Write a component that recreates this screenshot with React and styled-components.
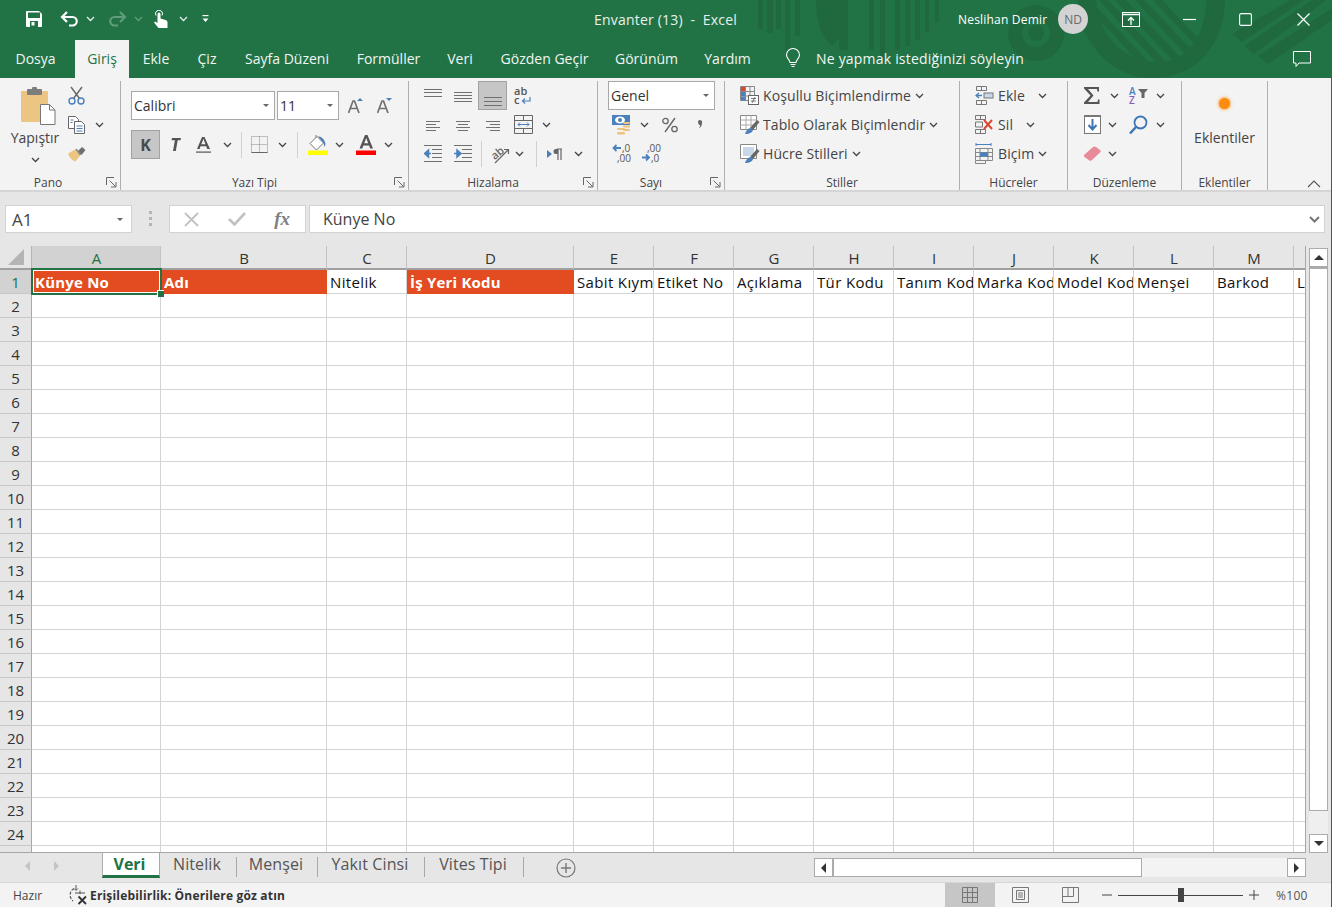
import styled, { createGlobalStyle } from 'styled-components';

const GlobalStyle = createGlobalStyle`
  html, body {
    margin: 0;
    padding: 0;
    height: 100%;
    overflow: hidden;
  }
  body {
    font-family: 'Open Sans', 'Noto Sans', sans-serif;
    color: #444;
  }
  * {
    box-sizing: border-box;
  }
  svg {
    display: block;
    flex-shrink: 0;
  }
`;

const Window = styled.div`
  position: relative;
  width: 1332px;
  height: 907px;
  display: flex;
  flex-direction: column;
  background-color: #e6e6e6;
  overflow: hidden;
`;
const EdgeLine = styled.div`
  position: absolute;
  right: 0;
  top: 78px;
  bottom: 0;
  width: 1px;
  background-color: #217346;
`;

/* green header */
const Header = styled.div`
  position: relative;
  height: 78px;
  background-color: #217346;
  color: #fff;
  flex-shrink: 0;
`;
const Decor = styled.svg`
  position: absolute;
  left: 0;
  top: 0;
`;
const TitleBar = styled.div`
  position: relative;
  height: 40px;
  padding-bottom: 2px;
  display: flex;
  align-items: center;
`;
const Qat = styled.div`
  width: 520px;
  padding-left: 26px;
  display: flex;
  align-items: center;
`;
const QatBtn = styled.div`
  width: ${(p) => p.$w}px;
  display: flex;
`;
const DocTitle = styled.div`
  width: 291px;
  text-align: center;
  font-size: 14px;
  letter-spacing: 0.2px;
  color: #e9f1ec;
  white-space: pre;
`;
const UserBlock = styled.div`
  margin-left: 147px;
  display: flex;
  align-items: center;
  font-size: 12px;
  letter-spacing: 0.2px;
  width: 130px;
  gap: 11px;
  white-space: nowrap;
`;
const Avatar = styled.div`
  width: 30px;
  height: 30px;
  border-radius: 50%;
  background-color: #d3d3d3;
  color: #6a6a6a;
  font-size: 12px;
  letter-spacing: 0;
  display: flex;
  align-items: center;
  justify-content: center;
`;
const WinButtons = styled.div`
  margin-left: 34px;
  display: flex;
  align-items: center;
  gap: 43px;
`;
const CloseSlot = styled.div`
  margin-left: 2px;
`;
const TabBar = styled.div`
  position: relative;
  height: 38px;
  display: flex;
  align-items: stretch;
`;
const RibbonTab = styled.div`
  width: ${(p) => p.$w}px;
  margin-left: ${(p) => p.$ml || 0}px;
  padding-bottom: 2px;
  display: flex;
  align-items: center;
  justify-content: center;
  font-size: 14px;
  white-space: nowrap;
  color: ${(p) => (p.$active ? '#217346' : '#f1f6f3')};
  background-color: ${(p) => (p.$active ? '#f3f3f3' : 'transparent')};
`;
const TellMe = styled.div`
  margin-left: 20px;
  padding-bottom: 2px;
  display: flex;
  align-items: center;
  gap: 15px;
  font-size: 14px;
  letter-spacing: 0.2px;
  color: #f1f6f3;
  width: 508px;
`;
const CommentSlot = styled.div`
  display: flex;
  align-items: center;
`;

/* ribbon */
const Ribbon = styled.div`
  height: 114px;
  flex-shrink: 0;
  display: flex;
  background-color: #f3f3f3;
  border-bottom: 2px solid #d5d5d5;
  position: relative;
`;
const Group = styled.div`
  position: relative;
  width: ${(p) => p.$w}px;
  height: 109px;
  margin-top: 3px;
  padding-left: ${(p) => p.$pl || 0}px;
  display: flex;
  flex-direction: column;
  border-right: 1px solid #b0b0b0;
`;
const GroupBody = styled.div`
  height: 90px;
  display: flex;
  flex-direction: column;
`;
const GroupLabel = styled.div`
  position: absolute;
  left: 0;
  right: ${(p) => p.$r || 0}px;
  bottom: -1px;
  text-align: center;
  font-size: 12px;
  color: #444;
`;
const Launcher = styled.div`
  position: absolute;
  right: 3px;
  bottom: 2px;
`;
const ToolRow = styled.div`
  height: 29px;
  margin-top: ${(p) => p.$mt || 0}px;
  display: flex;
  align-items: center;
`;
const Tool = styled.div`
  width: ${(p) => (p.$w === undefined ? 29 : p.$w)}px;
  height: ${(p) => (p.$on ? 29 : 24)}px;
  margin-left: ${(p) => p.$ml || 0}px;
  display: flex;
  align-items: center;
  justify-content: center;
  background-color: ${(p) => (p.$on ? '#c6c6c6' : 'transparent')};
  border: ${(p) => (p.$on ? '1px solid #a2a2a2' : 'none')};
  font-size: 14px;
  color: #555;
`;
const ToolSep = styled.div`
  width: 1px;
  height: 26px;
  background-color: #d0d0d0;
  margin-left: ${(p) => p.$m || 4}px;
  margin-right: ${(p) => p.$mr || p.$m || 4}px;
`;
const Combo = styled.div`
  width: ${(p) => p.$w}px;
  height: 29px;
  margin-right: 2px;
  background-color: #fff;
  border: 1px solid #a8a8a8;
  display: flex;
  align-items: center;
  justify-content: space-between;
  padding: 0 5px 0 2px;
  font-size: 14px;
  color: #333;
`;
const CaretDown = styled.span`
  width: 0;
  height: 0;
  border-left: 3px solid transparent;
  border-right: 3px solid transparent;
  border-top: 3px solid #666;
`;
const PanoBody = styled.div`
  display: flex;
`;
const PasteBtn = styled.div`
  width: 68px;
  flex-shrink: 0;
  padding: 6px 0 0 2px;
  display: flex;
  flex-direction: column;
  align-items: center;
  font-size: 14px;
  color: #444;
`;
const PasteArt = styled.div`
  margin-left: 7px;
`;
const PasteLabel = styled.div`
  margin: 2px 0 9px;
  line-height: 20px;
`;
const SmallTool = styled.div`
  height: 29px;
  display: flex;
  align-items: center;
  gap: 10px;
`;
const StyleRow = styled.div`
  height: 29px;
  display: flex;
  align-items: center;
  font-size: 14px;
  letter-spacing: 0.1px;
  color: #444;
  white-space: nowrap;
`;
const StyleIcon = styled.div`
  width: 23px;
  display: flex;
`;
const StyleChev = styled.div`
  margin-left: ${(p) => p.$ml || 4}px;
`;
const AddinBody = styled.div`
  display: flex;
  flex-direction: column;
  align-items: center;
  padding-top: 17px;
  font-size: 14px;
  color: #444;
`;
const AddinDot = styled.div`
  width: 11px;
  height: 11px;
  border-radius: 50%;
  background-color: #fb8c10;
  box-shadow: 0 0 3px 1px #fbb060;
`;
const AddinName = styled.div`
  margin-top: 19px;
`;
const Collapse = styled.div`
  position: absolute;
  right: 11px;
  bottom: 2px;
`;
const BoldLetterK = styled.span`
  font-weight: 700;
  font-size: 16px;
  color: #4a4a4a;
`;

/* formula bar */
const FormulaBar = styled.div`
  height: 54px;
  flex-shrink: 0;
  padding: 13px 7px 0 5px;
  display: flex;
  align-items: flex-start;
`;
const NameBox = styled.div`
  width: 127px;
  height: 28px;
  background-color: #fff;
  border: 1px solid #d2d2d2;
  display: flex;
  align-items: center;
  justify-content: space-between;
  padding: 0 8px 0 6px;
  font-size: 17px;
  color: #444;
`;
const Grip = styled.div`
  width: 37px;
  height: 28px;
  display: flex;
  align-items: center;
  justify-content: center;
`;
const FxBox = styled.div`
  width: 137px;
  height: 28px;
  margin-right: 3px;
  background-color: #fff;
  border: 1px solid #d2d2d2;
  display: flex;
  align-items: center;
  justify-content: space-between;
  padding: 0 15px 0 14px;
`;
const FxLabel = styled.span`
  font-family: 'Liberation Serif', serif;
  font-style: italic;
  font-weight: 700;
  font-size: 19px;
  color: #808080;
`;
const FormulaInput = styled.div`
  flex: 1;
  height: 28px;
  background-color: #fff;
  border: 1px solid #d2d2d2;
  display: flex;
  align-items: center;
  justify-content: space-between;
  padding: 0 4px 0 13px;
  font-size: 16px;
  color: #444;
`;

/* sheet */
const SheetArea = styled.div`
  flex: 1;
  min-height: 0;
  display: flex;
`;
const Sheet = styled.div`
  width: 1306px;
  overflow: hidden;
  border-bottom: 1px solid #a8a8a8;
  border-right: 1px solid #a8a8a8;
`;
const HeadRow = styled.div`
  height: 24px;
  display: flex;
`;
const Corner = styled.div`
  width: 32px;
  flex-shrink: 0;
  border-bottom: 2px solid #a0a0a0;
  border-right: 1px solid #b4b4b4;
  display: flex;
  align-items: center;
  justify-content: center;
`;
const ColHead = styled.div`
  width: ${(p) => p.$w}px;
  flex-shrink: 0;
  display: flex;
  align-items: center;
  justify-content: center;
  font-size: 15px;
  padding: 1px 0 0 1px;
  border-right: 1px solid #c2c2c2;
  border-bottom: 2px solid #a0a0a0;
  color: ${(p) => (p.$active ? '#217346' : '#333')};
  background-color: ${(p) => (p.$active ? '#d2d2d2' : 'transparent')};
  overflow: hidden;
`;
const Row = styled.div`
  height: 24px;
  display: flex;
`;
const RowHead = styled.div`
  width: 32px;
  flex-shrink: 0;
  display: flex;
  align-items: center;
  justify-content: center;
  font-size: 15px;
  border-right: 1px solid #a8a8a8;
  border-bottom: 1px solid #c8c8c8;
  color: ${(p) => (p.$active ? '#217346' : '#333')};
  background-color: ${(p) => (p.$active ? '#d2d2d2' : '#e6e6e6')};
`;
const Cell = styled.div`
  position: relative;
  width: ${(p) => p.$w}px;
  flex-shrink: 0;
  display: flex;
  align-items: center;
  padding-left: 3px;
  font-size: 15px;
  letter-spacing: ${(p) => (p.$head ? 0.2 : 0.35)}px;
  white-space: nowrap;
  overflow: ${(p) => (p.$sel ? 'visible' : 'hidden')};
  font-weight: ${(p) => (p.$head ? 700 : 400)};
  color: ${(p) => (p.$head ? '#fff' : '#111')};
  background-color: ${(p) => (p.$head ? '#e34c20' : '#fff')};
  border-right: 1px solid ${(p) => (p.$head ? '#e34c20' : '#d4d4d4')};
  border-bottom: 1px solid ${(p) => (p.$head ? '#e34c20' : '#d4d4d4')};
`;
const CellClip = styled.span`
  display: block;
  width: 100%;
  overflow: hidden;
`;
const Selection = styled.div`
  position: absolute;
  z-index: 2;
  left: -1px;
  top: -2px;
  right: -2px;
  bottom: -2px;
  border: 2px solid #217346;
  outline: 1px solid #fff;
  outline-offset: -3px;
`;
const Handle = styled.div`
  position: absolute;
  right: -4px;
  bottom: -4px;
  width: 7px;
  height: 7px;
  background-color: #217346;
  border-left: 1px solid #fff;
  border-top: 1px solid #fff;
`;

/* scrollbars */
const VScroll = styled.div`
  width: 26px;
  padding: 2px 0 0 3px;
  display: flex;
  flex-direction: column;
`;
const ScrollBtn = styled.div`
  width: 19px;
  height: 19px;
  background-color: #fff;
  border: 1px solid #ababab;
  display: flex;
  align-items: center;
  justify-content: center;
  flex-shrink: 0;
`;
const VThumb = styled.div`
  width: 19px;
  height: 544px;
  background-color: #fff;
  border: 1px solid #ababab;
  border-top-width: 2px;
`;
const VTrack = styled.div`
  flex: 1;
  width: 19px;
  background-color: #efefef;
`;
const Tri = styled.span`
  width: 0;
  height: 0;
  ${(p) => p.$dir === 'up' && `border-left: 5px solid transparent; border-right: 5px solid transparent; border-bottom: 5px solid #333;`}
  ${(p) => p.$dir === 'down' && `border-left: 5px solid transparent; border-right: 5px solid transparent; border-top: 5px solid #333;`}
  ${(p) => p.$dir === 'left' && `border-top: 5px solid transparent; border-bottom: 5px solid transparent; border-right: 5px solid ${p.$c || '#333'};`}
  ${(p) => p.$dir === 'right' && `border-top: 5px solid transparent; border-bottom: 5px solid transparent; border-left: 5px solid ${p.$c || '#333'};`}
`;

/* sheet tabs */
const TabStrip = styled.div`
  height: 29px;
  flex-shrink: 0;
  display: flex;
  align-items: flex-start;
`;
const TabNav = styled.div`
  width: 102px;
  height: 25px;
  padding-left: 25px;
  display: flex;
  align-items: center;
  gap: 24px;
`;
const SheetTab = styled.div`
  position: relative;
  width: ${(p) => p.$w}px;
  height: 25px;
  padding: 0 3px ${(p) => (p.$active ? 0 : 3)}px 0;
  display: flex;
  align-items: center;
  justify-content: center;
  font-size: 16px;
  letter-spacing: ${(p) => (p.$active ? 0 : 0.1)}px;
  white-space: nowrap;
  font-weight: ${(p) => (p.$active ? 700 : 400)};
  color: ${(p) => (p.$active ? '#217346' : '#555')};
  background-color: ${(p) => (p.$active ? '#fff' : 'transparent')};
  border-bottom: ${(p) => (p.$active ? '3px solid #217346' : 'none')};
  border-left: ${(p) => (p.$active ? '1px solid #b0b0b0' : 'none')};
  border-right: ${(p) => (p.$active ? '1px solid #a8a8a8' : 'none')};
  ${(p) => !p.$active && `
    &::after {
      content: '';
      position: absolute;
      right: 0;
      top: 4px;
      bottom: 1px;
      width: 1px;
      background-color: #a8a8a8;
    }
  `}
`;
const AddSheet = styled.div`
  width: 290px;
  padding: 5px 0 0 32px;
`;
const HScroll = styled.div`
  width: 492px;
  height: 19px;
  margin-top: 5px;
  display: flex;
  background-color: #f3f3f3;
`;
const HThumb = styled.div`
  width: 309px;
  height: 19px;
  background-color: #fff;
  border: 1px solid #ababab;
  margin-right: auto;
`;

/* status bar */
const StatusBar = styled.div`
  height: 25px;
  flex-shrink: 0;
  display: flex;
  align-items: center;
  background-color: #f3f3f3;
  border-top: 1px solid #d5d5d5;
  font-size: 12px;
  color: #444;
`;
const Ready = styled.div`
  width: 68px;
  padding-left: 13px;
`;
const Access = styled.div`
  width: 877px;
  display: flex;
  align-items: center;
  gap: 1px;
  font-weight: 700;
  letter-spacing: 0.18px;
  color: #333;
`;
const ViewBtn = styled.div`
  width: 50px;
  height: 24px;
  display: flex;
  align-items: center;
  justify-content: center;
  background-color: ${(p) => (p.$on ? '#c6c6c6' : 'transparent')};
`;
const ZoomBar = styled.div`
  margin-left: 7px;
  display: flex;
  align-items: center;
  gap: 6px;
`;
const SliderLine = styled.div`
  position: relative;
  width: 125px;
  height: 1px;
  background-color: #444;
`;
const SliderKnob = styled.div`
  position: absolute;
  left: 60px;
  top: -7px;
  width: 6px;
  height: 14px;
  background-color: #444;
`;
const ZoomPct = styled.div`
  margin-left: 17px;
  letter-spacing: 0.3px;
  color: #555;
`;

/* icons */
const Chev = ({ c = '#444' }) => (
  <svg width="9" height="6" viewBox="0 0 9 6">
    <path d="M1 1 4.500 4.500 8 1" fill="none" stroke={c} strokeWidth="1.300" />
  </svg>
);
const SaveIcon = () => (
  <svg width="16" height="16" viewBox="0 0 16 16">
    <path d="M0 1a1 1 0 0 1 1-1h12l3 3v12a1 1 0 0 1-1 1H1a1 1 0 0 1-1-1z" fill="#fff" />
    <rect x="2" y="1.500" width="12" height="5.500" fill="#217346" />
    <rect x="4" y="10" width="8" height="6" fill="#217346" />
    <rect x="5.500" y="11" width="3" height="3.500" fill="#fff" />
  </svg>
);
const UndoIcon = ({ c = '#fff' }) => (
  <svg width="19" height="16" viewBox="0 0 19 16">
    <path d="M2 6h10.500a4 4 0 0 1 0 8.500H9" fill="none" stroke={c} strokeWidth="2.200" />
    <path d="M7 1 2 6l5 5" fill="none" stroke={c} strokeWidth="2.200" />
  </svg>
);
const RedoIcon = () => (
  <svg width="19" height="16" viewBox="0 0 19 16">
    <path d="M17 6H6.500a4 4 0 0 0 0 8.500H10" fill="none" stroke="#5f9d7c" strokeWidth="2.200" />
    <path d="M12 1l5 5-5 5" fill="none" stroke="#5f9d7c" strokeWidth="2.200" />
  </svg>
);
const TouchIcon = () => (
  <svg width="16" height="18" viewBox="0 0 16 18">
    <path d="M3 5.500a3.500 3.500 0 1 1 6 0" fill="none" stroke="#fff" strokeWidth="1" />
    <path d="M4.500 4a1.500 1.500 0 0 1 3 0v4.500l5 1.500c1.500.5 2 1.200 2 2.500V18H5.500L1 12.500l1-1 2.500 1.500z" fill="#fff" />
  </svg>
);
const CustomizeIcon = () => (
  <svg width="7" height="8" viewBox="0 0 7 8">
    <rect x="0.500" y="0" width="6" height="1.200" fill="#fff" />
    <path d="M0.500 3.500h6L3.500 7z" fill="#fff" />
  </svg>
);
const BulbIcon = () => (
  <svg width="16" height="20" viewBox="0 0 16 20">
    <path d="M5 14.500c0-2.500-3.500-4-3.500-7.500a6.500 6.500 0 0 1 13 0c0 3.500-3.500 5-3.500 7.500z" fill="none" stroke="#fff" strokeWidth="1.100" />
    <path d="M5.500 16.500h5M6.500 18.500h3" stroke="#fff" strokeWidth="1.200" />
  </svg>
);
const RibbonDisplayIcon = () => (
  <svg width="18" height="15" viewBox="0 0 18 15">
    <rect x="0.500" y="0.500" width="17" height="14" fill="none" stroke="#fff" />
    <path d="M1 2.500h16" stroke="#fff" strokeWidth="1.500" />
    <path d="M9 13V6M6 8.500l3-3 3 3" fill="none" stroke="#fff" strokeWidth="1.300" />
  </svg>
);
const MinIcon = () => (
  <svg width="13" height="3" viewBox="0 0 13 3"><path d="M0 1.500h13" stroke="#fff" strokeWidth="1.200" /></svg>
);
const MaxIcon = () => (
  <svg width="13" height="13" viewBox="0 0 13 13"><rect x="0.600" y="0.600" width="11.800" height="11.800" rx="1.500" fill="none" stroke="#fff" strokeWidth="1.100" /></svg>
);
const CloseIcon = () => (
  <svg width="13" height="13" viewBox="0 0 13 13"><path d="M.5.500l12 12M12.500.500l-12 12" stroke="#fff" strokeWidth="1.200" /></svg>
);
const CommentIcon = () => (
  <svg width="18" height="17" viewBox="0 0 18 17">
    <path d="M.5.500h17v11.500H6l-3 3.500v-3.500H.5z" fill="none" stroke="#fff" strokeWidth="1" />
  </svg>
);
const PasteIcon = () => (
  <svg width="36" height="39" viewBox="0 0 36 39">
    <rect x="0" y="4" width="27" height="31" rx="1" fill="#edc582" />
    <rect x="6" y="2" width="15" height="6" rx="1" fill="#7d7d7d" />
    <rect x="11" y="0" width="5" height="4" rx="1" fill="#7d7d7d" />
    <path d="M19.500 17.500h9l5.500 5.500v14.500H19.500z" fill="#fff" stroke="#777" />
    <path d="M28.500 17.500v5.500H34" fill="none" stroke="#777" />
  </svg>
);
const CutIcon = () => (
  <svg width="17" height="19" viewBox="0 0 17 19">
    <path d="M3 1l8.500 11.500M14 1 5.500 12.500" stroke="#6a6a6a" strokeWidth="1.500" />
    <circle cx="4" cy="15" r="3" fill="none" stroke="#4a80bb" strokeWidth="1.400" />
    <circle cx="13" cy="15" r="3" fill="none" stroke="#4a80bb" strokeWidth="1.400" />
  </svg>
);
const CopyIcon = () => (
  <svg width="17" height="18" viewBox="0 0 17 18">
    <path d="M.5.500h7l3 3v9H.5z" fill="#fff" stroke="#666" />
    <path d="M6.500 5.500h7l3 3v9h-10z" fill="#fff" stroke="#666" />
    <path d="M8.500 10h6M8.500 12.500h6M8.500 15h6M2.500 4h3M2.500 6.500h2" stroke="#4a80bb" />
  </svg>
);
const PainterIcon = () => (
  <svg width="18" height="16" viewBox="0 0 18 16">
    <path d="M0 7.500 8 3l4.500 6-5 6.500C5 15 1.500 12 0 7.500z" fill="#edc582" />
    <path d="M9.500 5.500 14 1l3.500 3-4 5z" fill="#6f6f6f" />
    <path d="M8 3l4.500 6" stroke="#8d8d8d" strokeWidth="1.500" />
  </svg>
);
const GrowIcon = ({ down }) => (
  <svg width="15" height="17" viewBox="0 0 15 17">
    <path d="M.5 16 5 4h1.500L11 16M2.500 11.500h6.500" fill="none" stroke="#707070" strokeWidth="1.700" />
    <path d={down ? 'M9 1h6l-3 3z' : 'M9 4h6l-3-3z'} fill="#4a80bb" />
  </svg>
);
const ItalicT = () => (
  <svg width="12" height="13" viewBox="0 0 12 13">
    <path d="M3 0h9l-.5 2.300H8.700L6.800 13H4L5.900 2.300H2.500z" fill="#555" />
  </svg>
);
const UnderA = () => (
  <svg width="15" height="16" viewBox="0 0 15 16">
    <path d="M1 12 6 0h2.500L14 12h-2.800l-1-2.800H4.500L3.600 12zM5.300 7.200h4.200L7.400 2z" fill="#555" fillRule="evenodd" />
    <rect x="0" y="14.500" width="15" height="1.200" fill="#555" />
  </svg>
);
const BorderIcon = () => (
  <svg width="17" height="17" viewBox="0 0 17 17">
    <path d="M.5.500h16v16H.5zM.5 8.500h16M8.500.500v16" fill="none" stroke="#888" strokeDasharray="1 1" />
    <path d="M.5 16.500h16" stroke="#666" />
  </svg>
);
const FillIcon = () => (
  <svg width="20" height="21" viewBox="0 0 20 21">
    <path d="M8 1v4" stroke="#777" />
    <path d="M9 2.500 15.500 9l-7 7L2 9.500z" fill="#fff" stroke="#777" />
    <path d="M10 2.500c3.500 0 6.500 2.500 7.500 7.500L16.500 13 15.500 9z" fill="#4a80bb" />
    <rect x="0" y="16.500" width="20" height="4.500" fill="#ffff00" />
  </svg>
);
const FontColorIcon = () => (
  <svg width="20" height="21" viewBox="0 0 20 21">
    <path d="M3.500 14.500 9 1h2.500L17 14.500h-2.800l-1.100-3H7.300l-1 3zM8.200 9.300h4L10.200 4z" fill="#555" fillRule="evenodd" />
    <rect x="0" y="16.500" width="20" height="4.500" fill="#ff0000" />
  </svg>
);
const Lines = ({ rows, w = 18, h = 24 }) => (
  <svg width={w} height={h} viewBox={`0 0 ${w} ${h}`}>
    {rows.map(([y, a, b], i) => (
      <path key={i} d={`M${a} ${y}.5H${b}`} stroke="#707070" strokeWidth="1" />
    ))}
  </svg>
);
const WrapIcon = () => (
  <svg width="18" height="20" viewBox="0 0 18 20">
    <text x="0" y="9" fontSize="11" fontFamily="Open Sans" fontWeight="600" fill="#555">ab</text>
    <text x="0" y="18" fontSize="11" fontFamily="Open Sans" fontWeight="600" fill="#555">c</text>
    <path d="M16 11v4H8.500M11 12.500 8.500 15l2.500 2.500" fill="none" stroke="#4a80bb" strokeWidth="1.200" />
  </svg>
);
const MergeIcon = () => (
  <svg width="19" height="19" viewBox="0 0 19 19">
    <path d="M.5.500h18v18H.5zM.5 5.500h18M.5 13.500h18M9.500.500v5M9.500 13.500v5" fill="none" stroke="#666" />
    <path d="M4 9.500h11M6 7.500l-2 2 2 2M13 7.500l2 2-2 2" fill="none" stroke="#4a80bb" />
  </svg>
);
const IndentIcon = ({ inc }) => (
  <svg width="18" height="17" viewBox="0 0 18 17">
    <path d="M0 .500h18M8 4.500h10M8 8.500h10M8 12.500h10M0 16.500h18" stroke="#707070" />
    {inc ? (
      <path d="M0 8.500h5M3 5l4 3.500L3 12z" stroke="#4a80bb" fill="#4a80bb" strokeWidth="1.500" />
    ) : (
      <path d="M7 8.500H2M4.500 5 .500 8.500 4.500 12z" stroke="#4a80bb" fill="#4a80bb" strokeWidth="1.500" />
    )}
  </svg>
);
const OrientIcon = () => (
  <svg width="20" height="20" viewBox="0 0 20 20">
    <text x="1" y="14" fontSize="11" fontFamily="Open Sans" fontWeight="600" fill="#666" transform="rotate(-40 6 10)">ab</text>
    <path d="M5 19 18 6M14 5.500h4.500V10" fill="none" stroke="#666" strokeWidth="1.200" />
  </svg>
);
const RtlIcon = () => (
  <svg width="16" height="12" viewBox="0 0 16 12">
    <path d="M0 2v8l5-4z" fill="#4a80bb" />
    <path d="M11 1v11M14 1v11M10 1h5" fill="none" stroke="#666" strokeWidth="1.200" />
    <path d="M11 1H9a2.500 2.500 0 0 0 0 5h2z" fill="#666" />
  </svg>
);
const CurrencyIcon = () => (
  <svg width="20" height="20" viewBox="0 0 20 20">
    <rect x="0" y="0" width="18" height="10" fill="#4a80bb" />
    <ellipse cx="8" cy="5" rx="5" ry="3.500" fill="#fff" />
    <circle cx="8" cy="5" r="2" fill="#4a80bb" />
    <rect x="5" y="13" width="8" height="2" rx="1" fill="#f0c27c" />
    <rect x="5" y="17" width="8" height="2.500" rx="1" fill="#f0c27c" />
    <rect x="11" y="7" width="7" height="2" rx="1" fill="#f0c27c" />
    <rect x="11" y="10.500" width="7" height="2" rx="1" fill="#f0c27c" />
    <rect x="11" y="14" width="7" height="2" rx="1" fill="#f0c27c" />
  </svg>
);
const PercentIcon = () => (
  <svg width="16" height="16" viewBox="0 0 16 16">
    <circle cx="3.500" cy="4" r="2.700" fill="none" stroke="#666" strokeWidth="1.300" />
    <circle cx="12.500" cy="12" r="2.700" fill="none" stroke="#666" strokeWidth="1.300" />
    <path d="M13 1 3 15" stroke="#666" strokeWidth="1.400" />
  </svg>
);
const CommaIcon = () => (
  <svg width="6" height="9" viewBox="0 0 6 9">
    <path d="M1 1.500a2 2 0 1 1 4 1.500C5 6 3.500 7.500 1.500 8.500 3 7 3.200 6 3 5.300 1.500 5 1 3 1 1.500z" fill="#666" />
  </svg>
);
const DecimalIcon = ({ more }) => (
  <svg width="22" height="22" viewBox="0 0 22 22">
    <text x={more ? 7 : 11} y="9" fontSize="10" fontFamily="Open Sans" fill="#555">{more ? ',00' : ',0'}</text>
    <text x={more ? 11 : 6} y="19" fontSize="10" fontFamily="Open Sans" fill="#555">{more ? ',0' : ',00'}</text>
    {more ? (
      <path d="M2 14.500h6M6 11.500l3 3-3 3" fill="none" stroke="#4a80bb" strokeWidth="1.800" />
    ) : (
      <path d="M10 5H3M5.500 2l-3 3 3 3" fill="none" stroke="#4a80bb" strokeWidth="1.800" />
    )}
  </svg>
);
const CondIcon = () => (
  <svg width="19" height="19" viewBox="0 0 19 19">
    <path d="M.5.500h14v14H.5zM.5 5.500h14M.5 10h14M5.500.500v14M10 .500v14" fill="none" stroke="#888" />
    <rect x="1" y="1" width="4" height="4" fill="#d9482e" />
    <rect x="1" y="6" width="4" height="4" fill="#4a80bb" />
    <rect x="1" y="10.500" width="4" height="4" fill="#4a80bb" />
    <rect x="8.500" y="9.500" width="10" height="9" fill="#fff" stroke="#666" />
    <path d="M11 12.500h5M11 15h5M15 11l-3 6" stroke="#555" strokeWidth="0.800" />
  </svg>
);
const TableFmtIcon = ({ plain }) => (
  <svg width="20" height="20" viewBox="0 0 20 20">
    <path d="M.5.500h16v14H.5z" fill="#fff" stroke="#888" />
    {plain ? (
      <rect x="3" y="3" width="11" height="9" fill="#c8d8ea" />
    ) : (
      <path d="M.5 5h16M.5 10h16M6 .500v14M11 .500v14" stroke="#aaa" fill="none" />
    )}
    <path d="M10 13 17 5l2.500 2L13 15z" fill="#666" />
    <path d="M5 19c1-3 3-5.500 5-6l3 2c-.5 2-3 4-8 4z" fill="#4a80bb" />
  </svg>
);
const InsertCellsIcon = () => (
  <svg width="19" height="19" viewBox="0 0 19 19">
    <path d="M1.500.500h10v4h-10zM1.500 14.500h10v4h-10zM6.500.500v4M6.500 14.500v4M1.500 18.500v-4" fill="none" stroke="#777" />
    <rect x="9" y="7" width="9" height="5" fill="#c8d8ea" stroke="#777" />
    <path d="M7 9.500H1M4 7 1 9.500 4 12" fill="none" stroke="#4a80bb" strokeWidth="1.400" />
  </svg>
);
const DeleteCellsIcon = () => (
  <svg width="19" height="19" viewBox="0 0 19 19">
    <path d="M.500.500h10v4H.500zM.500 14.500h10v4H.500zM5.500.500v4M5.500 14.500v4M.500 7h7v5h-7z" fill="none" stroke="#777" />
    <path d="M9 5l8 9M17 5l-8 9" stroke="#d9482e" strokeWidth="2" />
  </svg>
);
const FormatCellsIcon = () => (
  <svg width="19" height="21" viewBox="0 0 19 21">
    <path d="M1 1.500h15M1 0v3M16 0v3M5 1.500h7" stroke="#4a80bb" fill="none" />
    <path d="M.5 5.500h17v12H.5zM.5 9.500h17M.5 13.500h17M5 5.500v12M13 5.500v12M.5 17.500v3h10v-3" fill="none" stroke="#888" />
    <rect x="5" y="9.500" width="8" height="4" fill="#4a80bb" />
  </svg>
);
const SigmaIcon = () => (
  <svg width="16" height="17" viewBox="0 0 16 17">
    <path d="M0 0h15v4.500h-1.500L13 2H4l5.500 6.500L4 15h9.500l.5-2.500h1.500V17H0v-1.500L6.500 8.500 0 1.500z" fill="#555" />
  </svg>
);
const SortIcon = () => (
  <svg width="20" height="20" viewBox="0 0 20 20">
    <text x="0" y="9" fontSize="10" fontFamily="Open Sans" fontWeight="600" fill="#4a80bb">A</text>
    <text x="0" y="18" fontSize="10" fontFamily="Open Sans" fontWeight="600" fill="#8a5cb0">Z</text>
    <path d="M9 3h10l-3.500 4v5h-3V7z" fill="#666" />
  </svg>
);
const FillDownIcon = () => (
  <svg width="17" height="19" viewBox="0 0 17 19">
    <rect x="0.500" y="0.500" width="16" height="18" fill="#fff" stroke="#777" />
    <rect x="0" y="0" width="17" height="2" fill="#777" />
    <path d="M8.500 4v10M4.500 10l4 4.500 4-4.500" fill="none" stroke="#3d76b5" strokeWidth="2" />
  </svg>
);
const FindIcon = () => (
  <svg width="19" height="20" viewBox="0 0 19 20">
    <circle cx="11.500" cy="7.500" r="6" fill="none" stroke="#3d76b5" strokeWidth="1.800" />
    <path d="M7 12 1 18.500" stroke="#3d76b5" strokeWidth="2.500" />
  </svg>
);
const EraserIcon = () => (
  <svg width="17" height="15" viewBox="0 0 17 15">
    <path d="M0 9 9 1c1-.800 2-.800 3 0l4 3c1 .8 1 1.500 0 2.500L8 14c-1 1-2 1-3 .2L.5 11C0 10.500-.200 9.700 0 9z" fill="#e88a9a" />
  </svg>
);
const LauncherIcon = () => (
  <svg width="11" height="11" viewBox="0 0 11 11">
    <path d="M.5 8V.5H8" fill="none" stroke="#666" />
    <path d="M3.500 3.500l6 6M10 5v5H5" fill="none" stroke="#666" />
  </svg>
);
const GripIcon = () => (
  <svg width="4" height="16" viewBox="0 0 4 16">
    <rect y="0" width="3" height="3" fill="#b5b5b5" />
    <rect y="6" width="3" height="3" fill="#b5b5b5" />
    <rect y="12" width="3" height="3" fill="#b5b5b5" />
  </svg>
);
const XMark = () => (
  <svg width="15" height="15" viewBox="0 0 15 15"><path d="M1 1l13 13M14 1 1 14" stroke="#c2c2c2" strokeWidth="1.800" /></svg>
);
const CheckMark = () => (
  <svg width="18" height="14" viewBox="0 0 18 14"><path d="M1 7l5.500 5.500L17 1" fill="none" stroke="#c2c2c2" strokeWidth="2.600" /></svg>
);
const PlusCircle = () => (
  <svg width="20" height="20" viewBox="0 0 20 20">
    <circle cx="10" cy="10" r="9" fill="none" stroke="#777" strokeWidth="1.200" />
    <path d="M10 5v10M5 10h10" stroke="#777" strokeWidth="1.400" />
  </svg>
);
const AccessIcon = () => (
  <svg width="21" height="20" viewBox="0 0 21 20">
    <path d="M6 3.500a7.500 7.500 0 0 0-1 12.500" fill="none" stroke="#555" strokeWidth="1.200" strokeDasharray="3 1.500" />
    <path d="M8 0v5M6 3.500 8 5.500l2-2M7 8h10M12 5.500v3.500" fill="none" stroke="#555" />
    <path d="M10.500 11.500l7.500 7.500M18 11.500 10.500 19" stroke="#333" strokeWidth="1.800" />
  </svg>
);
const NormalViewIcon = () => (
  <svg width="16" height="16" viewBox="0 0 16 16">
    <path d="M.5.500h15v15H.5zM.5 5.500h15M.5 10.500h15M5.500.500v15M10.500.500v15" fill="none" stroke="#777" />
  </svg>
);
const PageViewIcon = () => (
  <svg width="17" height="16" viewBox="0 0 17 16">
    <path d="M.5.500h16v15H.5z" fill="none" stroke="#777" />
    <path d="M4.500 3.500h8v9h-8zM6 6h5M6 8h5M6 10h5" fill="none" stroke="#777" />
  </svg>
);
const BreakViewIcon = () => (
  <svg width="17" height="16" viewBox="0 0 17 16">
    <path d="M.5.500h16v15H.5zM.5 9.500h11V.500M6 .500v9" fill="none" stroke="#777" />
  </svg>
);
const DecorArt = () => (
  <Decor width="1332" height="78" viewBox="0 0 1332 78">
    <g fill="#20693f">
      <rect x="758" y="0" width="5" height="29" />
      <rect x="767" y="0" width="6" height="33" />
      <rect x="776" y="0" width="5" height="29" />
      <rect x="785" y="0" width="5" height="50" />
      <rect x="795" y="0" width="5" height="36" />
      <path d="M816 0h24v38l-8 8c-10-8-16-22-16-46z" />
      <rect x="839" y="0" width="9" height="50" />
      <rect x="869" y="0" width="5" height="50" />
      <rect x="880" y="0" width="5" height="60" />
      <rect x="895" y="0" width="5" height="50" />
      <rect x="905" y="0" width="5" height="46" />
      <rect x="915" y="0" width="5" height="40" />
      <rect x="925" y="0" width="4" height="32" />
      <rect x="935" y="0" width="4" height="22" />
      <path d="M1036 5a28 28 0 1 0 .1 0zm0 14a14 14 0 1 1-.1 0z" fillRule="evenodd" />
      <path d="M1036 25a8 8 0 1 0 .1 0z" />
      <path d="M1078 0h18c2 30 22 60 60 62 34 1 50-30 50-62h19c0 44-30 78-70 78h-8c-38-3-69-38-69-78z" />
      <path d="M1090 0l66 70h-10L1081 0zM1108 0l62 66-8 3L1099 0zM1126 0l57 60-7 4-61-64zM1144 0l48 50-5 6-52-56zM1162 0l36 38-4 6-41-44z" />
      <path d="M1290 0h14l-62 42-10-8zM1312 0h14l-72 54-10-8zM1332 8v12l-64 44-10-8z" />
    </g>
  </Decor>
);

const columns = [
  { key: 'A', w: 129, text: 'Künye No', head: true },
  { key: 'B', w: 166, text: 'Adı', head: true },
  { key: 'C', w: 80, text: 'Nitelik' },
  { key: 'D', w: 167, text: 'İş Yeri Kodu', head: true },
  { key: 'E', w: 80, text: 'Sabit Kıymet' },
  { key: 'F', w: 80, text: 'Etiket No' },
  { key: 'G', w: 80, text: 'Açıklama' },
  { key: 'H', w: 80, text: 'Tür Kodu' },
  { key: 'I', w: 80, text: 'Tanım Kodu' },
  { key: 'J', w: 80, text: 'Marka Kodu' },
  { key: 'K', w: 80, text: 'Model Kodu' },
  { key: 'L', w: 80, text: 'Menşei' },
  { key: 'M', w: 80, text: 'Barkod' },
  { key: 'N', w: 12, text: 'L' },
];

const ribbonTabs = [
  { label: 'Dosya', w: 71 },
  { label: 'Giriş', w: 54, ml: 4, active: true },
  { label: 'Ekle', w: 54 },
  { label: 'Çiz', w: 48 },
  { label: 'Sayfa Düzeni', w: 112 },
  { label: 'Formüller', w: 91 },
  { label: 'Veri', w: 52 },
  { label: 'Gözden Geçir', w: 117 },
  { label: 'Görünüm', w: 87 },
  { label: 'Yardım', w: 75 },
];

const rowNumbers = Array.from({ length: 25 }, (_, i) => i + 1);

const App = () => {
  return (
    <Window>
      <GlobalStyle />
      <Header>
        <DecorArt />
        <TitleBar>
          <Qat>
            <QatBtn $w={34}><SaveIcon /></QatBtn>
            <QatBtn $w={26}><UndoIcon /></QatBtn>
            <QatBtn $w={22}><Chev c="#e4eee8" /></QatBtn>
            <QatBtn $w={26}><RedoIcon /></QatBtn>
            <QatBtn $w={19}><Chev c="#5f9d7c" /></QatBtn>
            <QatBtn $w={26}><TouchIcon /></QatBtn>
            <QatBtn $w={23}><Chev c="#e4eee8" /></QatBtn>
            <QatBtn $w={20}><CustomizeIcon /></QatBtn>
          </Qat>
          <DocTitle>Envanter (13)  -  Excel</DocTitle>
          <UserBlock>
            Neslihan Demir
            <Avatar>ND</Avatar>
          </UserBlock>
          <WinButtons>
            <RibbonDisplayIcon />
            <MinIcon />
            <MaxIcon />
            <CloseSlot><CloseIcon /></CloseSlot>
          </WinButtons>
        </TitleBar>
        <TabBar>
          {ribbonTabs.map((tab) => (
            <RibbonTab key={tab.label} $w={tab.w} $ml={tab.ml} $active={tab.active}>{tab.label}</RibbonTab>
          ))}
          <TellMe>
            <BulbIcon />
            Ne yapmak istediğinizi söyleyin
          </TellMe>
          <CommentSlot><CommentIcon /></CommentSlot>
        </TabBar>
      </Header>

      <Ribbon>
        <Group $w={121}>
          <PanoBody>
            <PasteBtn>
              <PasteArt><PasteIcon /></PasteArt>
              <PasteLabel>Yapıştır</PasteLabel>
              <Chev />
            </PasteBtn>
            <GroupBody>
              <SmallTool><CutIcon /></SmallTool>
              <SmallTool><CopyIcon /><Chev /></SmallTool>
              <SmallTool><PainterIcon /></SmallTool>
            </GroupBody>
          </PanoBody>
          <GroupLabel $r={24}>Pano</GroupLabel>
          <Launcher><LauncherIcon /></Launcher>
        </Group>

        <Group $w={288} $pl={10}>
          <GroupBody>
            <ToolRow $mt={10}>
              <Combo $w={144}>Calibri<CaretDown /></Combo>
              <Combo $w={62}>11<CaretDown /></Combo>
              <Tool><GrowIcon /></Tool>
              <Tool><GrowIcon down /></Tool>
            </ToolRow>
            <ToolRow $mt={10}>
              <Tool $on><BoldLetterK>K</BoldLetterK></Tool>
              <Tool><ItalicT /></Tool>
              <Tool><UnderA /></Tool>
              <Tool $w={18}><Chev /></Tool>
              <ToolSep $m={5} />
              <Tool $w={24}><BorderIcon /></Tool>
              <Tool $w={22}><Chev /></Tool>
              <ToolSep $m={4} />
              <Tool $w={32}><FillIcon /></Tool>
              <Tool $w={10}><Chev /></Tool>
              <Tool $w={34} $ml={5}><FontColorIcon /></Tool>
              <Tool $w={10}><Chev /></Tool>
            </ToolRow>
          </GroupBody>
          <GroupLabel $r={20}>Yazı Tipi</GroupLabel>
          <Launcher><LauncherIcon /></Launcher>
        </Group>

        <Group $w={189} $pl={9}>
          <GroupBody>
            <ToolRow>
              <Tool $w={30}><Lines rows={[[5, 0, 18], [8, 0, 18], [12, 0, 18]]} /></Tool>
              <Tool $w={30}><Lines rows={[[8, 0, 18], [11, 0, 18], [14, 0, 18], [17, 0, 18]]} /></Tool>
              <Tool $on $w={29}><Lines rows={[[13, 0, 18], [17, 0, 18], [21, 0, 18]]} /></Tool>
              <Tool $w={32}><WrapIcon /></Tool>
            </ToolRow>
            <ToolRow>
              <Tool $w={30}><Lines rows={[[8, 0, 14], [11, 0, 10], [14, 0, 14], [17, 0, 10]]} w={14} /></Tool>
              <Tool $w={30}><Lines rows={[[8, 0, 14], [11, 2, 12], [14, 0, 14], [17, 2, 12]]} w={14} /></Tool>
              <Tool $w={30}><Lines rows={[[8, 0, 14], [11, 4, 14], [14, 0, 14], [17, 4, 14]]} w={14} /></Tool>
              <Tool $w={30}><MergeIcon /></Tool>
              <Tool $w={16}><Chev /></Tool>
            </ToolRow>
            <ToolRow>
              <Tool $w={30}><IndentIcon /></Tool>
              <Tool $w={30}><IndentIcon inc /></Tool>
              <ToolSep $m={3} />
              <Tool $w={29}><OrientIcon /></Tool>
              <Tool $w={10}><Chev /></Tool>
              <ToolSep $m={12} $mr={4} />
              <Tool $w={28}><RtlIcon /></Tool>
              <Tool $w={18}><Chev /></Tool>
            </ToolRow>
          </GroupBody>
          <GroupLabel $r={20}>Hizalama</GroupLabel>
          <Launcher><LauncherIcon /></Launcher>
        </Group>

        <Group $w={127} $pl={10}>
          <GroupBody>
            <ToolRow>
              <Combo $w={107}>Genel<CaretDown /></Combo>
            </ToolRow>
            <ToolRow>
              <Tool $w={28}><CurrencyIcon /></Tool>
              <Tool $w={16}><Chev /></Tool>
              <Tool $w={36}><PercentIcon /></Tool>
              <Tool $w={24}><CommaIcon /></Tool>
            </ToolRow>
            <ToolRow>
              <Tool $w={28}><DecimalIcon /></Tool>
              <Tool $w={30}><DecimalIcon more /></Tool>
            </ToolRow>
          </GroupBody>
          <GroupLabel $r={20}>Sayı</GroupLabel>
          <Launcher><LauncherIcon /></Launcher>
        </Group>

        <Group $w={235} $pl={15}>
          <GroupBody>
            <StyleRow><StyleIcon><CondIcon /></StyleIcon>Koşullu Biçimlendirme<StyleChev><Chev /></StyleChev></StyleRow>
            <StyleRow><StyleIcon><TableFmtIcon /></StyleIcon>Tablo Olarak Biçimlendir<StyleChev><Chev /></StyleChev></StyleRow>
            <StyleRow><StyleIcon><TableFmtIcon plain /></StyleIcon>Hücre Stilleri<StyleChev><Chev /></StyleChev></StyleRow>
          </GroupBody>
          <GroupLabel>Stiller</GroupLabel>
        </Group>

        <Group $w={108} $pl={15}>
          <GroupBody>
            <StyleRow><StyleIcon><InsertCellsIcon /></StyleIcon>Ekle<StyleChev $ml={13}><Chev /></StyleChev></StyleRow>
            <StyleRow><StyleIcon><DeleteCellsIcon /></StyleIcon>Sil<StyleChev $ml={13}><Chev /></StyleChev></StyleRow>
            <StyleRow><StyleIcon><FormatCellsIcon /></StyleIcon>Biçim<StyleChev><Chev /></StyleChev></StyleRow>
          </GroupBody>
          <GroupLabel>Hücreler</GroupLabel>
        </Group>

        <Group $w={114} $pl={10}>
          <GroupBody>
            <ToolRow>
              <Tool $w={28}><SigmaIcon /></Tool>
              <Tool $w={16}><Chev /></Tool>
              <Tool $w={28} $ml={3}><SortIcon /></Tool>
              <Tool $w={14}><Chev /></Tool>
            </ToolRow>
            <ToolRow>
              <Tool $w={28}><FillDownIcon /></Tool>
              <Tool $w={12}><Chev /></Tool>
              <Tool $w={30} $ml={5}><FindIcon /></Tool>
              <Tool $w={14}><Chev /></Tool>
            </ToolRow>
            <ToolRow>
              <Tool $w={28}><EraserIcon /></Tool>
              <Tool $w={12}><Chev /></Tool>
            </ToolRow>
          </GroupBody>
          <GroupLabel>Düzenleme</GroupLabel>
        </Group>

        <Group $w={86}>
          <GroupBody>
            <AddinBody>
              <AddinDot />
              <AddinName>Eklentiler</AddinName>
            </AddinBody>
          </GroupBody>
          <GroupLabel>Eklentiler</GroupLabel>
        </Group>

        <Collapse><svg width="14" height="8" viewBox="0 0 14 8"><path d="M1 7l6-6 6 6" fill="none" stroke="#555" strokeWidth="1.100" /></svg></Collapse>
      </Ribbon>

      <FormulaBar>
        <NameBox>A1<CaretDown /></NameBox>
        <Grip><GripIcon /></Grip>
        <FxBox>
          <XMark />
          <CheckMark />
          <FxLabel>fx</FxLabel>
        </FxBox>
        <FormulaInput>
          Künye No
          <svg width="11" height="7" viewBox="0 0 11 7"><path d="M1 1l4.500 4.500L10 1" fill="none" stroke="#777" strokeWidth="2" /></svg>
        </FormulaInput>
      </FormulaBar>

      <SheetArea>
        <Sheet>
          <HeadRow>
            <Corner>
              <svg width="16" height="16" viewBox="0 0 16 16"><path d="M16 0v16H0z" fill="#b5b5b5" /></svg>
            </Corner>
            {columns.map((col) => (
              <ColHead key={col.key} $w={col.w} $active={col.key === 'A'}>{col.key === 'N' ? '' : col.key}</ColHead>
            ))}
          </HeadRow>
          {rowNumbers.map((n) => (
            <Row key={n}>
              <RowHead $active={n === 1}>{n}</RowHead>
              {columns.map((col) => (
                <Cell key={col.key} $w={col.w} $head={n === 1 && col.head} $sel={n === 1 && col.key === 'A'}>
                  {n === 1 && <CellClip>{col.text}</CellClip>}
                  {n === 1 && col.key === 'A' && (
                    <Selection><Handle /></Selection>
                  )}
                </Cell>
              ))}
            </Row>
          ))}
        </Sheet>
        <VScroll>
          <ScrollBtn><Tri $dir="up" /></ScrollBtn>
          <VThumb />
          <VTrack />
          <ScrollBtn><Tri $dir="down" /></ScrollBtn>
        </VScroll>
      </SheetArea>

      <TabStrip>
        <TabNav>
          <Tri $dir="left" $c="#c4c4c4" />
          <Tri $dir="right" $c="#c4c4c4" />
        </TabNav>
        <SheetTab $w={58} $active>Veri</SheetTab>
        <SheetTab $w={77}>Nitelik</SheetTab>
        <SheetTab $w={81}>Menşei</SheetTab>
        <SheetTab $w={107}>Yakıt Cinsi</SheetTab>
        <SheetTab $w={99}>Vites Tipi</SheetTab>
        <AddSheet><PlusCircle /></AddSheet>
        <HScroll>
          <ScrollBtn><Tri $dir="left" /></ScrollBtn>
          <HThumb />
          <ScrollBtn><Tri $dir="right" /></ScrollBtn>
        </HScroll>
      </TabStrip>

      <StatusBar>
        <Ready>Hazır</Ready>
        <Access>
          <AccessIcon />
          Erişilebilirlik: Önerilere göz atın
        </Access>
        <ViewBtn $on><NormalViewIcon /></ViewBtn>
        <ViewBtn><PageViewIcon /></ViewBtn>
        <ViewBtn><BreakViewIcon /></ViewBtn>
        <ZoomBar>
          <svg width="10" height="10" viewBox="0 0 10 10"><path d="M0 5h10" stroke="#444" /></svg>
          <SliderLine><SliderKnob /></SliderLine>
          <svg width="10" height="10" viewBox="0 0 10 10"><path d="M0 5h10M5 0v10" stroke="#444" /></svg>
        </ZoomBar>
        <ZoomPct>%100</ZoomPct>
      </StatusBar>
      <EdgeLine />
    </Window>
  );
};

export default App;
